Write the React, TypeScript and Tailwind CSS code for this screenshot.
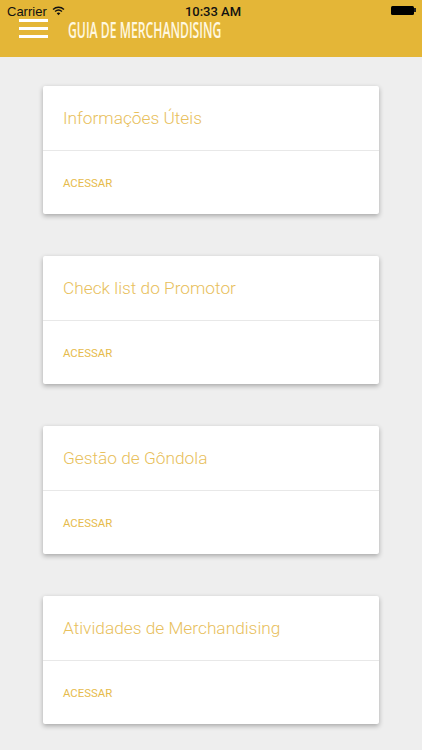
const items = ['Informações Úteis', 'Check list do Promotor', 'Gestão de Gôndola', 'Atividades de Merchandising'];

function Wifi() {
  return (
    <svg width="13" height="10" viewBox="0 0 14 11" className="ml-[5px] mt-[-1px]">
      <path d="M1 3.8 C4.4 0.6 9.6 0.6 13 3.8" fill="none" stroke="#111" strokeWidth="1.6" />
      <path d="M3.2 6 C5.4 4.1 8.6 4.1 10.8 6" fill="none" stroke="#111" strokeWidth="1.6" />
      <path d="M5 8.1 C6.2 7 7.8 7 9 8.1 L7 10.3 Z" fill="#111" />
    </svg>
  );
}

function Card({ title }: { title: string }) {
  return (
    <div className="h-[128px] w-[336px] rounded-[2px] bg-white shadow-[0_2px_5px_rgba(0,0,0,0.3)]">
      <div className="flex h-[65px] items-center border-b border-[#e8e8e8] pl-[20px] pt-[2px]">
        <h2 className="text-[17.3px] font-light text-[#e8c05c]">{title}</h2>
      </div>
      <div className="flex h-[63px] items-center pl-[20px] pt-[4px]">
        <span className="text-[11.4px] text-[#e6bb4c]">ACESSAR</span>
      </div>
    </div>
  );
}

export default function App() {
  return (
    <div className="flex h-[750px] w-[422px] flex-col overflow-hidden bg-[#eeeeee] font-['Roboto',sans-serif]">
      <header className="h-[57px] shrink-0 bg-[#e4b637]">
        <div className="flex h-[21px] items-center justify-between pl-[7px] pr-[6px] pt-[2px] font-['Liberation_Sans',sans-serif] text-[13px] leading-[15px] text-[#111]">
          <div className="flex w-[130px] items-center">
            <span>Carrier</span>
            <Wifi />
          </div>
          <span className="ml-[3px] font-['Roboto',sans-serif] text-[13px] font-medium">10:33 AM</span>
          <div className="flex w-[130px] justify-end">
            <div className="mt-[-3px] flex items-center">
              <div className="h-[9px] w-[23px] rounded-[1.5px] bg-black" />
              <div className="h-[4px] w-[1.5px] bg-[#222]" />
            </div>
          </div>
        </div>
        <div className="mt-[-2px] flex items-start pl-[19px]">
          <div className="flex w-[29px] flex-col gap-[5px]">
            <div className="h-[3px] bg-white" />
            <div className="h-[3px] bg-white" />
            <div className="h-[3px] bg-white" />
          </div>
          <h1 className="ml-[19.5px] mt-[3px] w-[153px] origin-left scale-x-[0.58] whitespace-nowrap font-['Open_Sans',sans-serif] text-[21px] font-semibold leading-[16px] text-[#fff8e0]">GUIA DE MERCHANDISING</h1>
        </div>
      </header>
      <main className="flex flex-col gap-[42px] pl-[43px] pt-[28.5px]">
        {items.map((t) => (
          <Card key={t} title={t} />
        ))}
      </main>
    </div>
  );
}
